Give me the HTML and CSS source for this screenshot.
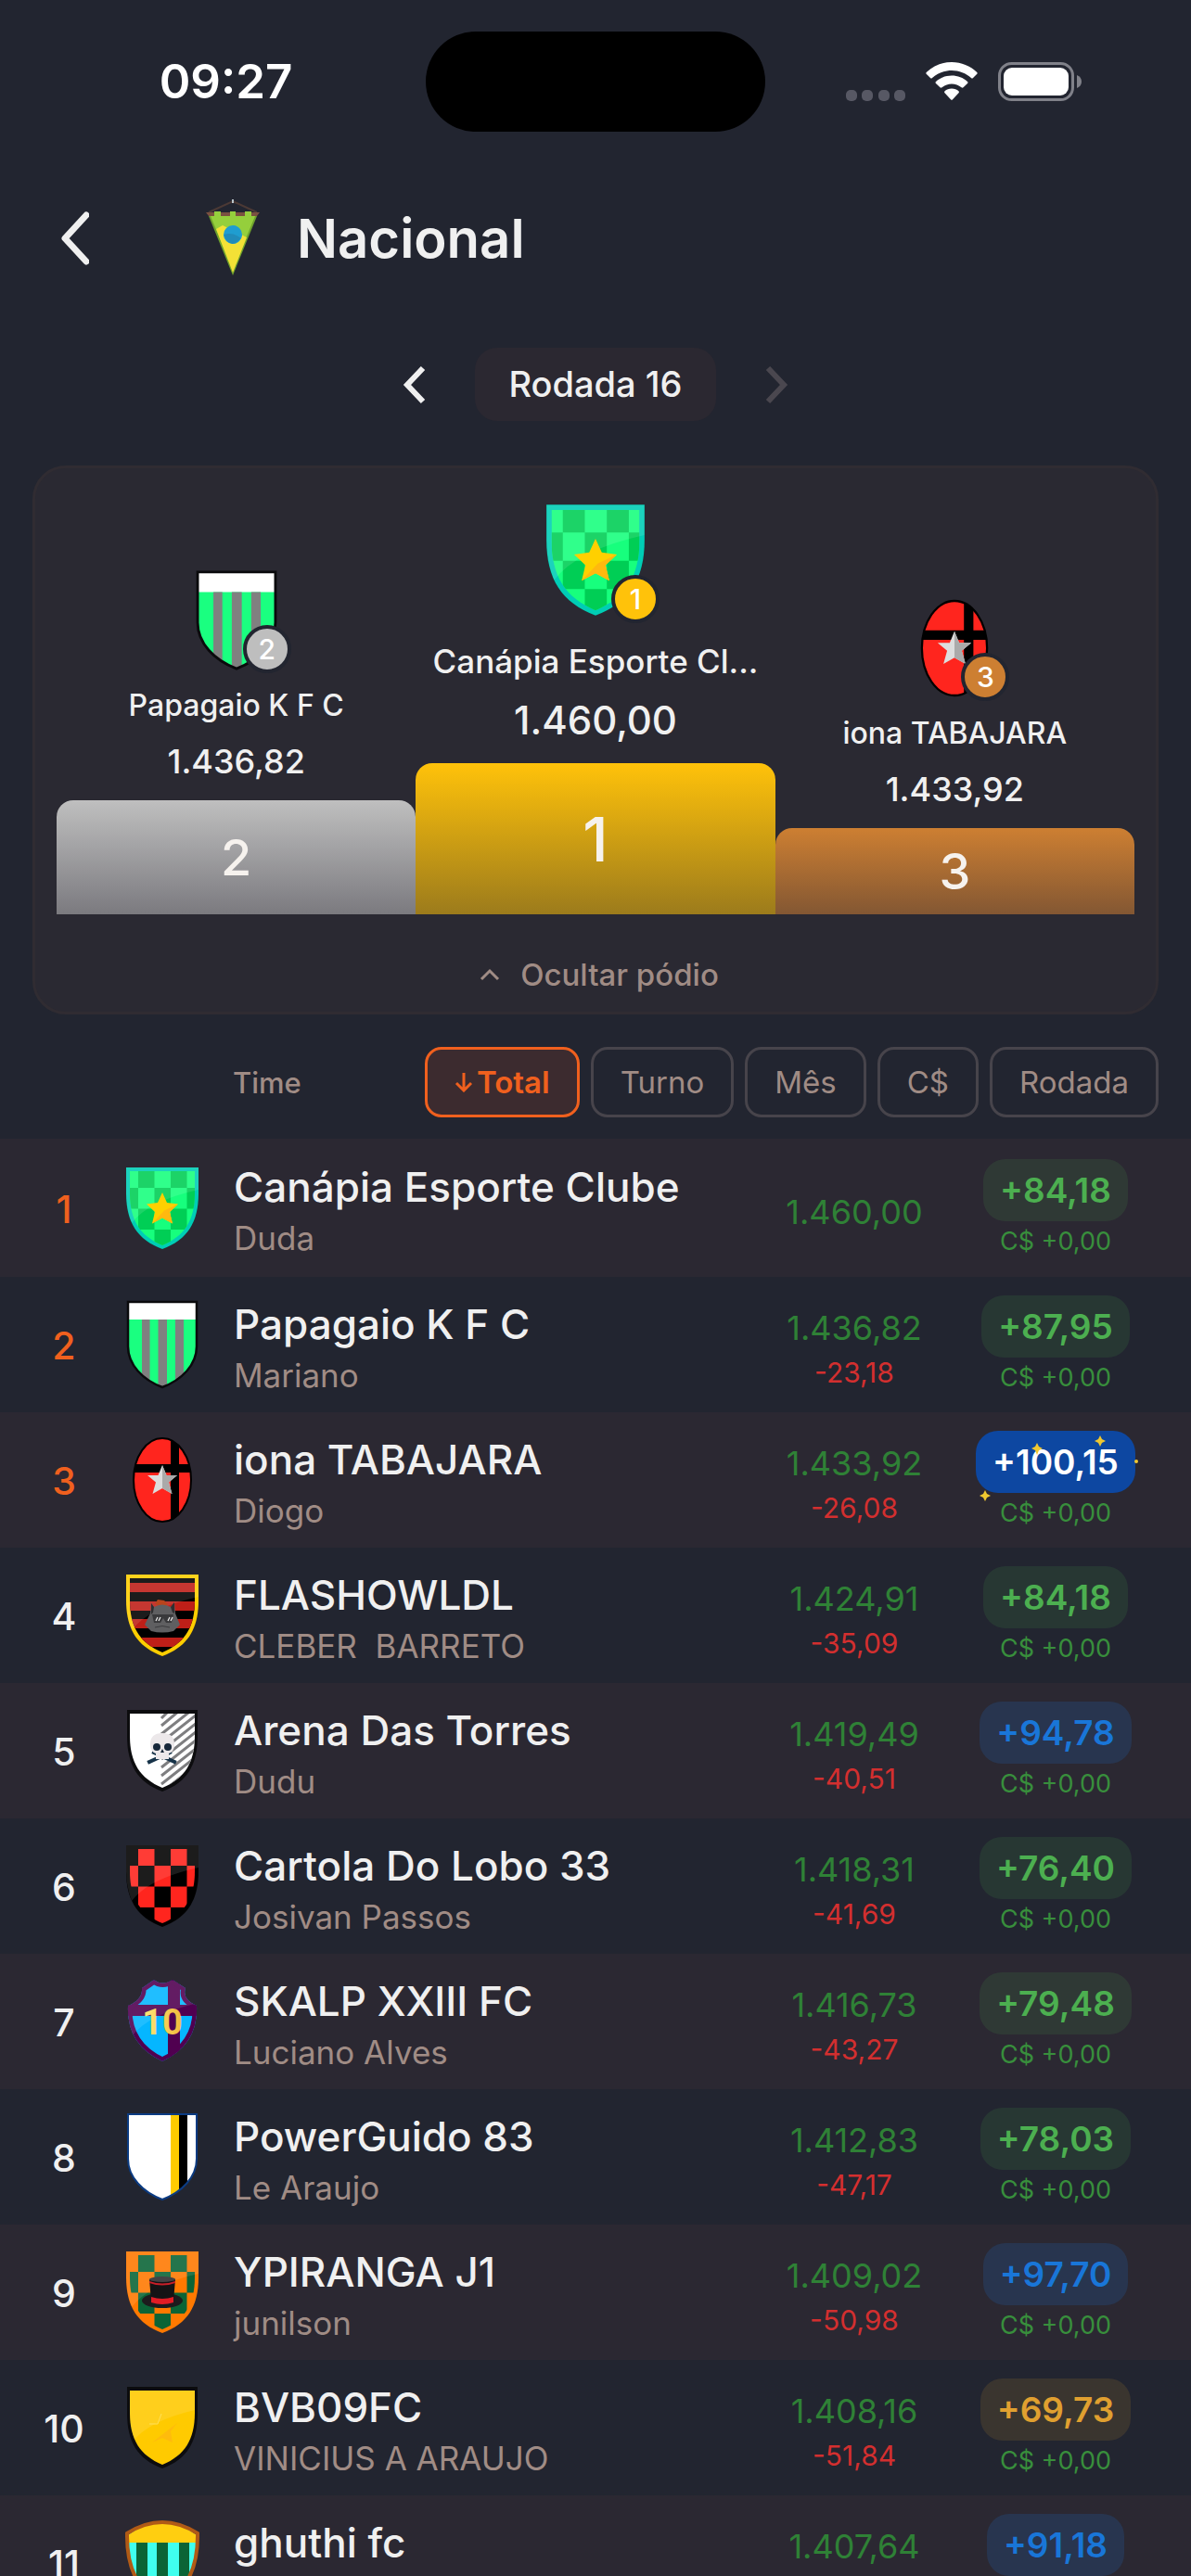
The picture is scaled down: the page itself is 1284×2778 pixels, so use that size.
FILE: index.html
```html
<!DOCTYPE html>
<html lang="pt-BR">
<head>
<meta charset="utf-8">
<meta name="viewport" content="width=device-width, initial-scale=1">
<title>Nacional</title>
<link rel="stylesheet" href="styles.css">
</head>
<body>
<svg class="defs" aria-hidden="true">
  <defs>
    <clipPath id="shield"><path d="M6 6H84V34C84 65 72 84 45 94C18 84 6 65 6 34Z"/></clipPath>
    <clipPath id="inner"><path d="M10 10H80V34C80 63 69 80 45 90C21 80 10 63 10 34Z"/></clipPath>
    <clipPath id="slim"><path d="M8 4H82V52C82 72 66 88 45 96C24 88 8 72 8 52Z"/></clipPath>
    <clipPath id="oval"><ellipse cx="45" cy="50" rx="31" ry="45"/></clipPath>
    <clipPath id="crown"><path d="M23 14L36 5Q45 12 56 5L70 14Q66 26 82 33Q84 75 45 93Q6 75 8 33Q24 26 23 14Z"/></clipPath>
    <clipPath id="dome"><path d="M8 20Q45 -8 82 20Q82 75 45 90Q8 75 8 20Z"/></clipPath>
    <linearGradient id="goldNumber" x1="0" x2="1"><stop offset="0" stop-color="#ffe97a"/><stop offset="1" stop-color="#f0b93a"/></linearGradient>
    <path id="gloss" d="M6 6H84V30Q30 42 12 66Q6 50 6 34Z" fill="#fff" fill-opacity=".11"/>
    <g id="checks">
      <path d="M19 10h17.500v18h-17.500zM54 10h17.500v18h-17.500zM10 28h9v22.500h-9zM36.500 28h17.500v22.500h-17.500zM71.500 28h9v22.500h-9zM19 50.500h17.500v22.500h-17.500zM54 50.500h17.500v22.500h-17.500zM36.500 73h17.500v18h-17.500z"/>
    </g>
    <symbol id="crest-canapia" viewBox="0 0 90 100">
      <path d="M6 6H84V34C84 65 72 84 45 94C18 84 6 65 6 34Z" fill="#00cdb5"/>
      <g clip-path="url(#inner)"><path fill="#17ff7d" d="M6 6h78v90H6z"/><use href="#checks" fill="#00ce55"/></g>
      <use href="#gloss" clip-path="url(#shield)"/>
      <path d="M45 33l5 11 12 1.500-9 8.500 3 12.500-11-6-11 6 3-12.500-9-8.500 12-1.500z" fill="#ffd000"/>
      <path d="M62 45.500l-9 8.500 3 12.500-11-6-11 6 13-14z" fill="#ffb90f"/>
    </symbol>
    <symbol id="crest-papagaio" viewBox="0 0 90 100">
      <g clip-path="url(#slim)"><path fill="#1aff80" d="M0 0h90v100H0z"/><path fill="#fff" d="M0 0h90v23H0z"/><path fill="#808080" d="M23 23h8.500v77H23zM40.500 23h9.500v77h-9.500zM59 23h9v77h-9z"/></g>
      <path d="M8 4H82V52C82 72 66 88 45 96C24 88 8 72 8 52Z" fill="none" stroke="#0a0a0c" stroke-width="2.500"/>
    </symbol>
    <symbol id="crest-iona" viewBox="0 0 90 100">
      <g clip-path="url(#oval)"><path fill="#ff251e" d="M0 0h90v100H0z"/><path d="M0 33h90v9H0zM54 0h9v100h-9z"/></g>
      <ellipse cx="45" cy="50" rx="31" ry="45" fill="none" stroke="#000" stroke-width="2"/>
      <path d="M45 34l4.500 11H61l-9 7.500 3.500 12.500-10.500-6-10.500 6 3.500-12.500-9-7.500h11.500z" fill="#ddd"/>
      <path d="M45 34l4.500 11H61l-9 7.500 3.500 12.500-10.500-6z" fill="#aaa"/>
    </symbol>
    <symbol id="crest-flash" viewBox="0 0 90 100">
      <path d="M6 6H84V34C84 65 72 84 45 94C18 84 6 65 6 34Z" fill="#ffce00"/>
      <g clip-path="url(#inner)"><path d="M0 0h90v100H0z"/><path fill="#be1f18" d="M0 15h90v10H0zM0 35h90v10H0zM0 54h90v10H0zM0 74h90v10H0z"/></g>
      <use href="#gloss" clip-path="url(#shield)"/>
      <path d="M37 38l3-5 7 1 4 4-4 3z" fill="#b8441c"/>
      <path d="M33 37l3 4q9-5 18 0l4-5 1 12 5 12-7 7q-12 3-24 0l-7-7 6-12z" fill="#5f5f61"/>
      <path d="M33 37l3 4-1 6-2 2zM58 36l-4 5 2 6 2 1z" fill="#2f2f31"/>
      <path d="M34 49h23l-2 9h-6l-3-5-3 5h-7z" fill="#39393b"/>
      <path d="M38 56l2-4M41 56l2-4M51 56l2-4M54 56l2-4" stroke="#eee" stroke-width="1.200"/>
      <path d="M37 63q8-3 16 0" stroke="#3b3b3d" fill="none"/>
    </symbol>
    <symbol id="crest-arena" viewBox="0 0 90 100">
      <path d="M7 6H83V34C83 65 72 84 45 94C18 84 7 65 7 34Z" fill="#0c0c0e"/>
      <g clip-path="url(#inner)"><path fill="#fff" d="M0 0h90v100H0z"/><path d="M44 15l12-12M44 23l24-20M44 32l38-30M44 41l38-30M44 50l38-30M44 59l38-30M44 68l38-30M44 77l38-30M44 86l38-30M44 95l38-30" stroke="#7e7e80" stroke-width="3"/></g>
      <path d="M31 62l22-10M58 62l-22-10" stroke="#173349" stroke-width="4" stroke-linecap="square"/>
      <path d="M32 43q0-12 13-12t13 12q0 8-6 10v6H38v-6q-6-2-6-10z" fill="#ece8ea"/>
      <circle cx="39" cy="46" r="4" fill="#17283a"/><circle cx="51" cy="46" r="4" fill="#17283a"/><path d="M45 48l-2 4h4z" fill="#17283a"/>
    </symbol>
    <symbol id="crest-lobo" viewBox="0 0 90 100">
      <path d="M6 6H84V34C84 65 72 84 45 94C18 84 6 65 6 34Z"/>
      <g clip-path="url(#inner)"><use href="#checks" fill="#ff251e"/></g>
      <use href="#gloss" clip-path="url(#shield)"/>
    </symbol>
    <symbol id="crest-skalp" viewBox="0 0 90 100">
      <g clip-path="url(#crown)"><path fill="#05b6ff" d="M0 0h90v100H0z"/><path fill="#500050" d="M51 0h13v100H51zM0 32h90v12H0z"/><path d="M23 14L36 5Q45 12 56 5L70 14Q66 26 82 33Q84 75 45 93Q6 75 8 33Q24 26 23 14Z" fill="none" stroke="#500050" stroke-width="9"/></g>
      <use href="#gloss" clip-path="url(#crown)"/>
      <text x="45" y="64" class="crest-number" fill="url(#goldNumber)">10</text>
    </symbol>
    <symbol id="crest-guido" viewBox="0 0 90 100">
      <g clip-path="url(#slim)"><path fill="#fff" d="M0 0h90v100H0z"/><path fill="#fc0" d="M54 0h9v100h-9z"/><path d="M63 0h9v100h-9z"/></g>
      <path d="M8 4H82V52C82 72 66 88 45 96C24 88 8 72 8 52Z" fill="none" stroke="#0b3b82" stroke-width="2"/>
    </symbol>
    <symbol id="crest-ypiranga" viewBox="0 0 90 100">
      <path d="M6 6H84V34C84 65 72 84 45 94C18 84 6 65 6 34Z" fill="#ff7900"/>
      <g clip-path="url(#inner)"><use href="#checks" fill="#0b6436"/></g>
      <use href="#gloss" clip-path="url(#shield)"/>
      <ellipse cx="45" cy="59" rx="22" ry="8" fill="#1d1b1d"/>
      <path d="M31 36h28l-2 24q-12 4-24 0z" fill="#151315"/><ellipse cx="45" cy="36" rx="14" ry="3" fill="#454345"/>
      <path d="M33 55q12 4 24 0v6q-12 4-24 0z" fill="#e21c25"/><path d="M31 38q14 5 28 0v2q-14 5-28 0z" fill="#c91f28"/>
    </symbol>
    <symbol id="crest-bvb" viewBox="0 0 90 100">
      <path d="M7 6H83V34C83 65 72 84 45 94C18 84 7 65 7 34Z" fill="#0c0c0e"/>
      <path d="M10 10H80V34C80 63 69 80 45 90C21 80 10 63 10 34Z" fill="#ffca00"/>
      <use href="#gloss" clip-path="url(#inner)"/>
      <path d="M61 45L34 66l11-5 11 5-2-12z" fill="#ffbb0c"/><path d="M31 46h9l4-11" fill="none" stroke="#ffe05a"/>
    </symbol>
    <symbol id="crest-ghuthi" viewBox="0 0 90 100">
      <g clip-path="url(#dome)"><path fill="#40ffee" d="M0 0h90v100H0z"/><path fill="#0b6436" d="M17 28h12v72H17zM39 28h12v72H39zM63 28h11v72H63z"/><path fill="#ffce10" d="M0 0h90v28H0z"/></g>
      <path d="M7 18Q45 -6 83 18Q84 75 45 92Q6 75 7 18Z" fill="none" stroke="#b05a16" stroke-width="4"/>
    </symbol>
  </defs>
</svg>

<div class="app">
  <div class="status">
    <span class="clock">09:27</span>
    <div class="island"></div>
    <div class="status-icons">
      <svg width="64" height="12" viewBox="0 0 64 12" fill="#575864"><rect width="12" height="12" rx="5"/><rect x="17" width="12" height="12" rx="5"/><rect x="35" width="12" height="12" rx="5"/><rect x="52" width="12" height="12" rx="5"/></svg>
      <svg class="wifi" width="56" height="42" viewBox="0 0 56 42" fill="#fff"><path d="M28 0C17.500 0 8 4 .700 11Q0 12 .700 12.700L5 17Q6 18 7 17C12.500 12 20 9 28 9s15.500 3 21 8q1 1 2 0l4.300-4.300Q56 12 55.300 11C48 4 38.500 0 28 0z"/><path d="M28 14.500c-6.500 0-12.500 2.300-17 6.500q-1 1 0 2l4.500 4.300q1 .700 2 0C20.500 25 24 23.500 28 23.500s7.500 1.500 10.500 3.800q1 .700 2 0L45 23q1-1 0-2c-4.500-4.200-10.500-6.500-17-6.500z"/><path d="M28 28.500c-3 0-5.500 1-7.500 2.700q-1 1 0 2l6.500 7q1 1 2 0l6.500-7q1-1 0-2C33.500 29.500 31 28.500 28 28.500z"/></svg>
      <svg width="90" height="42" viewBox="0 0 90 42"><rect x="1.500" y="1.500" width="79" height="39" rx="13" fill="none" stroke="#808189" stroke-width="3"/><rect x="6" y="6" width="70" height="30" rx="9" fill="#fff"/><path d="M85 14q5 2 5 7t-5 7z" fill="#808189"/></svg>
    </div>
  </div>

  <header class="header">
    <button class="icon-button back" aria-label="Voltar"><svg width="32" height="58" viewBox="0 0 32 58"><path d="M29 4L6 29l23 25" fill="none" stroke="#f0f0f0" stroke-width="7" stroke-linecap="round" stroke-linejoin="round"/></svg></button>
    <svg class="pennant" width="58" height="84" viewBox="0 0 58 84"><path d="M3 14L29 2l26 12" fill="none" stroke="#4b3935" stroke-width="2"/><path d="M29 0v4" stroke="#b8c2c8" stroke-width="2"/><path d="M0 14h58l-3 4H3z" fill="#7a5140"/><path d="M3 18h52L29 82z" fill="#6fa22d"/><path d="M9 13h7v5h10v-5h6v5h10v-5h7v5h4L29 76 5 18h4z" fill="#95cf3c"/><path d="M11 32l7-4 10 5 16 8L29 79z" fill="#f3e136"/><circle cx="29" cy="38" r="10" fill="#1f9dd0"/><path d="M19.500 38q10-3 18 4-5 6-9 6-7-1-9-10z" fill="#218bb9"/></svg>
    <h1>Nacional</h1>
  </header>

  <nav class="round" aria-label="Rodada">
    <button class="icon-button" aria-label="Rodada anterior"><svg width="26" height="42" viewBox="0 0 26 42"><path d="M22 3L5 21l17 18" fill="none" stroke="#f0f0f0" stroke-width="6"/></svg></button>
    <button class="round-name">Rodada 16</button>
    <button class="icon-button" aria-label="Próxima rodada" disabled><svg width="26" height="42" viewBox="0 0 26 42"><path d="M4 3l17 18L4 39" fill="none" stroke="#4a474f" stroke-width="6"/></svg></button>
  </nav>

  <section class="podium">
    <div class="places">
      <div class="place">
        <div class="place-crest"><svg width="102" height="114"><use href="#crest-papagaio"/></svg><span class="medal silver">2</span></div>
        <div class="place-name">Papagaio K F C</div><div class="place-score">1.436,82</div>
        <div class="step step-2">2</div>
      </div>
      <div class="place first">
        <div class="place-crest"><svg width="122" height="136"><use href="#crest-canapia"/></svg><span class="medal gold">1</span></div>
        <div class="place-name">Canápia Esporte Cl...</div><div class="place-score">1.460,00</div>
        <div class="step step-1">1</div>
      </div>
      <div class="place">
        <div class="place-crest"><svg width="102" height="114"><use href="#crest-iona"/></svg><span class="medal bronze">3</span></div>
        <div class="place-name">iona TABAJARA</div><div class="place-score">1.433,92</div>
        <div class="step step-3">3</div>
      </div>
    </div>
    <button class="toggle"><svg width="22" height="14" viewBox="0 0 22 14"><path d="M2 12l9-9 9 9" fill="none" stroke="#a08c85" stroke-width="3"/></svg>Ocultar pódio</button>
  </section>

  <div class="sort">
    <span class="sort-label">Time</span>
    <button class="chip active"><svg width="20" height="22" viewBox="0 0 20 22"><path d="M10 1v19M2 12l8 8 8-8" fill="none" stroke="#f0601e" stroke-width="3"/></svg>Total</button>
    <button class="chip">Turno</button>
    <button class="chip">Mês</button>
    <button class="chip">C$</button>
    <button class="chip">Rodada</button>
  </div>

  <table class="ranking">
    <tbody>
      <tr class="top"><td class="rank">1</td><td class="crest"><svg width="90" height="100"><use href="#crest-canapia"/></svg></td><td class="team"><div class="name">Canápia Esporte Clube</div><div class="owner">Duda</div></td><td class="total"><div>1.460,00</div></td><td class="score"><div class="pill green">+84,18</div><div class="coins">C$ +0,00</div></td></tr>
      <tr class="top"><td class="rank">2</td><td class="crest"><svg width="90" height="100"><use href="#crest-papagaio"/></svg></td><td class="team"><div class="name">Papagaio K F C</div><div class="owner">Mariano</div></td><td class="total"><div>1.436,82</div><div class="delta">-23,18</div></td><td class="score"><div class="pill green">+87,95</div><div class="coins">C$ +0,00</div></td></tr>
      <tr class="top"><td class="rank">3</td><td class="crest"><svg width="90" height="100"><use href="#crest-iona"/></svg></td><td class="team"><div class="name">iona TABAJARA</div><div class="owner">Diogo</div></td><td class="total"><div>1.433,92</div><div class="delta">-26,08</div></td><td class="score"><div class="pill record">+100,15<svg class="sparks" width="180" height="80" viewBox="0 0 180 80" fill="#f0c830"><path d="M66 13l2 4 4 2-4 2-2 5-2-5-4-2 4-2zM134 5l2 4 4 2-4 2-2 4-2-4-4-2 4-2zM10 64l2 4 4 2-4 2-2 4-2-4-4-2 4-2z"/><circle cx="173" cy="33" r="2"/></svg></div><div class="coins">C$ +0,00</div></td></tr>
      <tr><td class="rank">4</td><td class="crest"><svg width="90" height="100"><use href="#crest-flash"/></svg></td><td class="team"><div class="name">FLASHOWLDL</div><div class="owner">CLEBER&nbsp; BARRETO</div></td><td class="total"><div>1.424,91</div><div class="delta">-35,09</div></td><td class="score"><div class="pill green">+84,18</div><div class="coins">C$ +0,00</div></td></tr>
      <tr><td class="rank">5</td><td class="crest"><svg width="90" height="100"><use href="#crest-arena"/></svg></td><td class="team"><div class="name">Arena Das Torres</div><div class="owner">Dudu</div></td><td class="total"><div>1.419,49</div><div class="delta">-40,51</div></td><td class="score"><div class="pill blue">+94,78</div><div class="coins">C$ +0,00</div></td></tr>
      <tr><td class="rank">6</td><td class="crest"><svg width="90" height="100"><use href="#crest-lobo"/></svg></td><td class="team"><div class="name">Cartola Do Lobo 33</div><div class="owner">Josivan Passos</div></td><td class="total"><div>1.418,31</div><div class="delta">-41,69</div></td><td class="score"><div class="pill green">+76,40</div><div class="coins">C$ +0,00</div></td></tr>
      <tr><td class="rank">7</td><td class="crest"><svg width="90" height="100"><use href="#crest-skalp"/></svg></td><td class="team"><div class="name">SKALP XXIII FC</div><div class="owner">Luciano Alves</div></td><td class="total"><div>1.416,73</div><div class="delta">-43,27</div></td><td class="score"><div class="pill green">+79,48</div><div class="coins">C$ +0,00</div></td></tr>
      <tr><td class="rank">8</td><td class="crest"><svg width="90" height="100"><use href="#crest-guido"/></svg></td><td class="team"><div class="name">PowerGuido 83</div><div class="owner">Le Araujo</div></td><td class="total"><div>1.412,83</div><div class="delta">-47,17</div></td><td class="score"><div class="pill green">+78,03</div><div class="coins">C$ +0,00</div></td></tr>
      <tr><td class="rank">9</td><td class="crest"><svg width="90" height="100"><use href="#crest-ypiranga"/></svg></td><td class="team"><div class="name">YPIRANGA J1</div><div class="owner">junilson</div></td><td class="total"><div>1.409,02</div><div class="delta">-50,98</div></td><td class="score"><div class="pill blue">+97,70</div><div class="coins">C$ +0,00</div></td></tr>
      <tr><td class="rank">10</td><td class="crest"><svg width="90" height="100"><use href="#crest-bvb"/></svg></td><td class="team"><div class="name">BVB09FC</div><div class="owner">VINICIUS A ARAUJO</div></td><td class="total"><div>1.408,16</div><div class="delta">-51,84</div></td><td class="score"><div class="pill amber">+69,73</div><div class="coins">C$ +0,00</div></td></tr>
      <tr><td class="rank">11</td><td class="crest"><svg width="90" height="100"><use href="#crest-ghuthi"/></svg></td><td class="team"><div class="name">ghuthi fc</div><div class="owner">&nbsp;</div></td><td class="total"><div>1.407,64</div><div class="delta">&nbsp;</div></td><td class="score"><div class="pill blue">+91,18</div><div class="coins">&nbsp;</div></td></tr>
    </tbody>
  </table>
</div>
</body>
</html>
```
FILE: styles.css
```css
* { box-sizing: border-box; }

body {
  margin: 0;
  background: #222530;
  color: #f0f0f0;
  font-family: Inter, "Liberation Sans", sans-serif;
}

button {
  border: 0;
  padding: 0;
  background: none;
  color: inherit;
  font: inherit;
}

svg { display: block; flex: none; }

.defs { position: absolute; width: 0; height: 0; }

.app { height: 100vh; overflow: hidden; }

/* status bar */
.status {
  display: grid;
  grid-template-columns: 1fr auto 1fr;
  align-items: center;
  height: 176px;
}
.clock { padding-left: 28px; font-size: 51px; font-weight: 600; line-height: 64px; text-align: center; color: #fff; }
.island { width: 366px; height: 108px; border-radius: 54px; background: #000; }
.status-icons { display: flex; justify-content: center; align-items: flex-end; gap: 22px; padding-right: 32px; }

/* header */
.header {
  display: flex;
  align-items: center;
  height: 162px;
  padding-left: 64px;
}
.back { margin-right: 126px; }
.pennant { margin-right: 40px; }
h1 { margin: 0; font-size: 58px; font-weight: 600; line-height: 72px; }

.round {
  display: flex;
  align-items: center;
  justify-content: center;
  gap: 52px;
  margin-top: 37px;
}
.round-name {
  padding: 16px 36px;
  border-radius: 24px;
  background: #2b2831;
  font-size: 38px;
  font-weight: 500;
  line-height: 47px;
}

/* podium */
.podium {
  margin: 48px 35px 0;
  padding: 31px 23px 20px;
  border: 3px solid #302c32;
  border-radius: 36px;
  background: #2a2932;
}
.places { display: flex; align-items: flex-end; }
.place {
  flex: 1;
  min-width: 0;
  display: flex;
  flex-direction: column;
  align-items: center;
}
.place-crest { position: relative; margin-bottom: 15px; }
.medal {
  position: absolute;
  right: -8px;
  bottom: 0;
  width: 52px;
  height: 52px;
  border: 4px solid #222530;
  border-radius: 50%;
  color: #fff;
  font-size: 30px;
  font-weight: 500;
  line-height: 44px;
  text-align: center;
}
.place-name { font-size: 32px; font-weight: 500; line-height: 40px; margin-bottom: 18px; white-space: nowrap; }
.place-score { font-size: 36px; font-weight: 500; line-height: 44px; margin-bottom: 20px; }
.first .place-crest { margin-bottom: 19px; }
.first .place-name { font-size: 35px; line-height: 44px; margin-bottom: 16px; }
.first .place-score { font-size: 42px; line-height: 52px; }
.step {
  display: flex;
  align-items: center;
  justify-content: center;
  align-self: stretch;
  border-radius: 18px 18px 0 0;
  color: #f6f2ee;
  font-size: 54px;
  font-weight: 500;
}
.step-1 { height: 163px; background: linear-gradient(#ffc20a, #9c7b1c); font-size: 66px; }
.step-2 { height: 123px; background: linear-gradient(#bfbfbf, #7b7a7f); }
.step-3 { height: 93px; background: linear-gradient(#cd7f32, #835733); }
.silver { background: #bebebe; }
.gold { background: #ffc20a; }
.bronze { background: #cd7f32; }
.toggle {
  display: flex;
  align-items: center;
  gap: 22px;
  margin: 45px auto 0;
  padding-left: 8px;
  color: #a08c85;
  font-size: 33px;
  font-weight: 500;
  line-height: 40px;
}

/* sort bar */
.sort {
  display: flex;
  align-items: center;
  gap: 12px;
  padding: 35px 35px 23px 251px;
}
.sort-label { margin-right: auto; color: #a08c85; font-size: 31px; font-weight: 500; }
.chip {
  display: flex;
  align-items: center;
  gap: 4px;
  height: 76px;
  padding: 0 29px;
  border: 3px solid #47444b;
  border-radius: 18px;
  color: #a08c85;
  font-size: 33px;
}
.active { border-color: #f0601e; background: #3c2b2f; color: #f0601e; font-weight: 600; }

/* ranking */
.ranking, .ranking tbody { display: block; }
.ranking tr {
  display: grid;
  grid-template-columns: 130px 90px minmax(0, 1fr) 216px 218px;
  align-items: center;
  height: 146px;
  padding-right: 37px;
}
.ranking tr:first-child { height: 149px; }
.ranking tr:nth-child(odd) { background: #2b2832; }
.ranking td { padding: 0; }
.ranking .rank { padding-top: 2px; padding-left: 8px; font-size: 41px; font-weight: 500; text-align: center; }
.top .rank { color: #f0601e; }
.ranking .team { padding-top: 4px; padding-left: 32px; white-space: nowrap; }
.name { font-size: 44px; font-weight: 500; line-height: 54px; }
.owner { margin-top: 7px; color: #a08c85; font-size: 35px; line-height: 42px; }
.ranking .total { padding-top: 8px; color: #2f8136; font-size: 36px; line-height: 44px; text-align: center; }
.total .delta { margin-top: 8px; color: #d32f2f; font-size: 30px; line-height: 36px; }
.score { display: flex; flex-direction: column; align-items: center; gap: 5px; }
.pill {
  position: relative;
  padding: 0 18px;
  border-radius: 24px;
  font-size: 37px;
  font-weight: 600;
  line-height: 67px;
}
.green { background: rgba(76, 175, 80, .13); color: #4caf50; }
.blue { background: rgba(25, 118, 210, .18); color: #1976d8; }
.amber { background: rgba(224, 160, 48, .13); color: #e0a030; }
.record { background: #0d47a1; color: #fff; }
.sparks { position: absolute; left: 0; top: 0; }
.coins { color: #388e3c; font-size: 27px; line-height: 34px; }

.crest-number { font-size: 38px; font-weight: 700; text-anchor: middle; font-family: Roboto, "Liberation Sans", sans-serif; }
```
